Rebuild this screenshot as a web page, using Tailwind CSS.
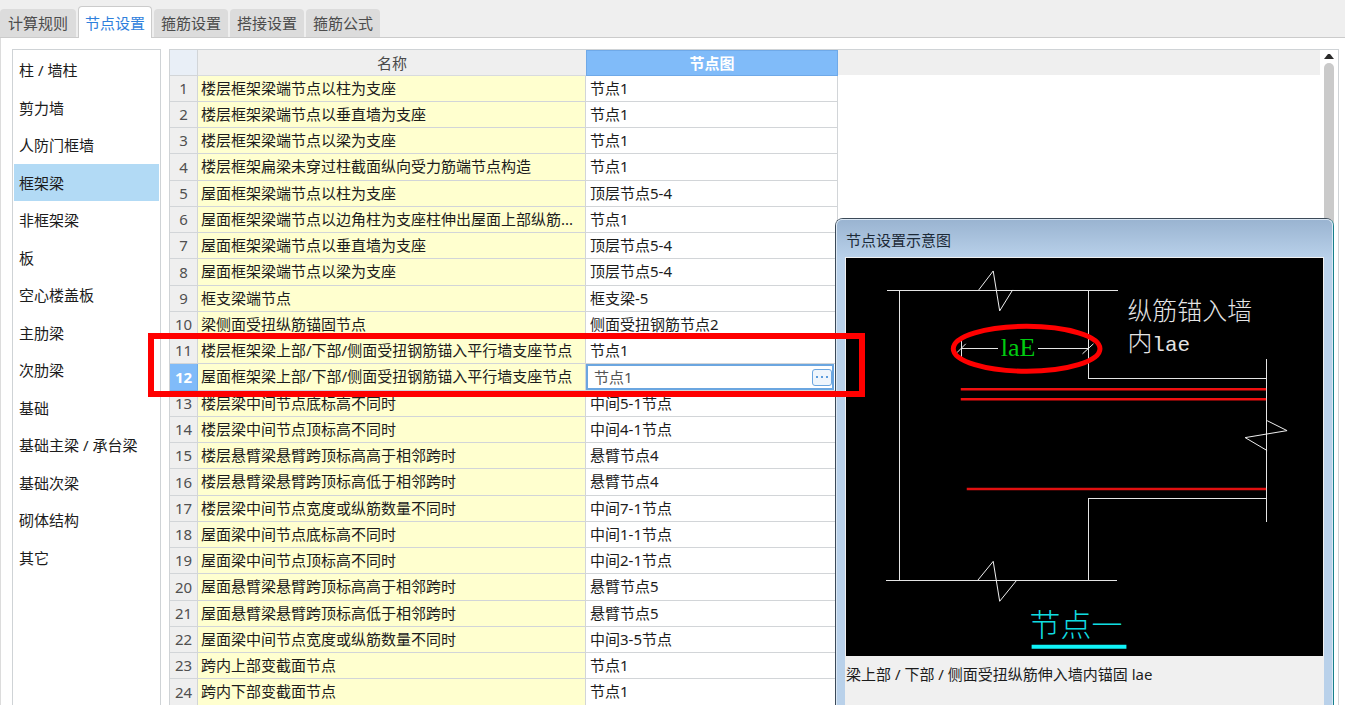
<!DOCTYPE html>
<html lang="zh-CN">
<head>
<meta charset="utf-8">
<title>节点设置</title>
<script src="https://cdn.jsdelivr.net/npm/@tailwindcss/browser@4"></script>
</head>
<body class="relative flex h-screen flex-col overflow-hidden bg-white font-['Noto_Sans','Noto_Sans_CJK_SC',sans-serif] text-[15px] leading-5 text-[#1c1c1c]">
  <nav class="flex h-[38px] shrink-0 items-end gap-0.5 border-b border-[#cbcbcb] bg-[#efefef] text-[#4c4c4c]" role="tablist">
    <button role="tab" class="h-7 w-[76px] rounded-t bg-[#dcdcdc]">计算规则</button>
    <button role="tab" aria-selected="true" class="-mb-px h-8 w-[74px] rounded-t border border-b-0 border-[#cbcbcb] bg-white text-[#2f80dc]">节点设置</button>
    <button role="tab" class="h-7 w-[74px] rounded-t bg-[#dcdcdc]">箍筋设置</button>
    <button role="tab" class="h-7 w-[74px] rounded-t bg-[#dcdcdc]">搭接设置</button>
    <button role="tab" class="h-7 w-[74px] rounded-t bg-[#dcdcdc]">箍筋公式</button>
  </nav>

  <main class="flex min-h-0 flex-1 gap-2 border-l border-[#dcdcdc] pt-[11px] pr-1.5 pl-[11px]">
    <aside class="w-[149px] shrink-0 border border-b-0 border-[#cfd3d6] px-px pt-0.5">
      <ul id="members" class="[&>li]:h-[37px] [&>li]:pb-px [&>li:nth-child(even)]:h-[38px]"></ul>
    </aside>

    <section class="flex min-w-0 flex-1 overflow-hidden border-t border-r border-l border-[#cfd3d6]">
      <table class="w-[668px] shrink-0 table-fixed border-separate border-spacing-0 self-start">
        <colgroup><col class="w-7"><col class="w-[388px]"><col class="w-[252px]"></colgroup>
        <thead>
          <tr class="h-[26px]">
            <th class="border-r border-b border-[#d2d5d8] bg-[#e9eff7] p-0"></th>
            <th class="border-b border-[#d8dbde] bg-[#efefef] p-0 font-normal text-[#4a4a4a]">名称</th>
            <th class="border border-[#6fa9e8] bg-[#80bbf9] p-0 font-bold text-white">节点图</th>
          </tr>
        </thead>
        <tbody id="nodes" class="[&>tr]:h-[26px] [&>tr:nth-child(4n)]:h-[27px]"></tbody>
      </table>
      <div class="h-[25px] flex-1 bg-[#efefef]"></div>
      <div class="flex w-[18px] shrink-0 flex-col items-center gap-1 pt-1">
        <svg class="h-[5px] w-[10px] shrink-0" viewBox="0 0 10 5"><path d="M0 5 4 0H6L10 5Z" fill="#2b2b2b"/></svg>
        <div class="w-[10px] flex-1 rounded-t-full bg-[#cacaca]"></div>
      </div>
    </section>
  </main>

  <section aria-label="节点设置示意图" class="absolute top-[218px] right-[11px] bottom-0 left-[835px] flex flex-col rounded-t-lg border border-b-0 border-[#3c4a58] border-r-[#16808c] bg-[#b9d1ea]">
    <div class="flex flex-1 flex-col rounded-t-md border border-b-0 border-[#dbe8f5] bg-linear-to-b from-[#9ab4d1] to-[#b9d1ea] to-[38px] px-2">
      <h2 class="flex h-[37px] shrink-0 items-center px-px pt-0.5 text-[#1c2a38]">节点设置示意图</h2>
      <div class="flex flex-1 flex-col border border-b-0 border-[#f0f0f0] bg-[#f0f0f0]">
        <svg class="w-full shrink-0 bg-black" viewBox="0 0 478 399" fill="none" role="img" aria-label="节点一">
          <g stroke="#e6e6e6" shape-rendering="crispEdges">
            <path d="M41 32.500H273M53.500 32V323M243.500 32V121M243 120.500H422M421.500 101V265M243 241.500H422M243.500 241V323M40 323.500H272M116 90.500H152M192 90.500H243M115.500 79V100"/>
          </g>
          <g stroke="#f0f0f0">
            <path d="M133 32 147.500 13 154 53 167 32M132 323 147.500 304 154 344 171 323M422 163 442 173 400 180 422 193M111 95 120 86M237 96 248 86"/>
          </g>
          <path d="M115 131.500H421M115 141.500H421" stroke="#f01010" stroke-width="2.500"/>
          <path d="M121 231.500H421" stroke="#e01010" stroke-width="2.500"/>
          <g class="font-['Liberation_Mono','Noto_Sans_CJK_SC',monospace] font-light">
            <text x="282" y="62" font-size="25" fill="#e4e4e4">纵筋锚入墙</text>
            <text x="282" y="93" font-size="25" fill="#e4e4e4">内<tspan font-size="21">lae</tspan></text>
            <text x="155" y="98" class="font-['Liberation_Serif',serif] font-normal" font-size="26" fill="#00cc10">laE</text>
            <text x="184" y="379" font-size="31" fill="#10dce0">节点一</text>
          </g>
          <path d="M186 389.500H281" stroke="#10f4f8" stroke-width="4"/>
          <ellipse cx="181" cy="91" rx="73.500" ry="22.500" stroke="#ff0000" stroke-width="5"/>
        </svg>
        <p class="pt-2">梁上部 / 下部 / 侧面受扭纵筋伸入墙内锚固 lae</p>
      </div>
    </div>
  </section>

  <div class="pointer-events-none absolute top-[333px] left-[148px] h-16 w-[717px] border-6 border-[#ff0000]"></div>

<script>
const members = ['柱 / 墙柱','剪力墙','人防门框墙','框架梁','非框架梁','板','空心楼盖板','主肋梁','次肋梁','基础','基础主梁 / 承台梁','基础次梁','砌体结构','其它'];
document.getElementById('members').innerHTML = members.map(m =>
  `<li><button class="${m === '框架梁' ? 'h-full w-full bg-[#b2daf5] px-[5px] text-left' : 'h-full w-full px-[5px] text-left'}">${m}</button></li>`).join('');

const nodes = [
  ['楼层框架梁端节点以柱为支座','节点1'],
  ['楼层框架梁端节点以垂直墙为支座','节点1'],
  ['楼层框架梁端节点以梁为支座','节点1'],
  ['楼层框架扁梁未穿过柱截面纵向受力筋端节点构造','节点1'],
  ['屋面框架梁端节点以柱为支座','顶层节点5-4'],
  ['屋面框架梁端节点以边角柱为支座柱伸出屋面上部纵筋...','节点1'],
  ['屋面框架梁端节点以垂直墙为支座','顶层节点5-4'],
  ['屋面框架梁端节点以梁为支座','顶层节点5-4'],
  ['框支梁端节点','框支梁-5'],
  ['梁侧面受扭纵筋锚固节点','侧面受扭钢筋节点2'],
  ['楼层框架梁上部/下部/侧面受扭钢筋锚入平行墙支座节点','节点1'],
  ['屋面框架梁上部/下部/侧面受扭钢筋锚入平行墙支座节点','节点1'],
  ['楼层梁中间节点底标高不同时','中间5-1节点'],
  ['楼层梁中间节点顶标高不同时','中间4-1节点'],
  ['楼层悬臂梁悬臂跨顶标高高于相邻跨时','悬臂节点4'],
  ['楼层悬臂梁悬臂跨顶标高低于相邻跨时','悬臂节点4'],
  ['楼层梁中间节点宽度或纵筋数量不同时','中间7-1节点'],
  ['屋面梁中间节点底标高不同时','中间1-1节点'],
  ['屋面梁中间节点顶标高不同时','中间2-1节点'],
  ['屋面悬臂梁悬臂跨顶标高高于相邻跨时','悬臂节点5'],
  ['屋面悬臂梁悬臂跨顶标高低于相邻跨时','悬臂节点5'],
  ['屋面梁中间节点宽度或纵筋数量不同时','中间3-5节点'],
  ['跨内上部变截面节点','节点1'],
  ['跨内下部变截面节点','节点1']
];
const editor = v => `<div class="flex h-[26px] w-[248px] items-center border-2 border-[#6ba6e0] bg-white">
  <input aria-label="节点图" value="${v}" class="min-w-0 flex-1 px-1.5 text-[#555] outline-none">
  <button aria-label="选择节点" class="flex h-[17px] w-5 items-center justify-center rounded-[3px] border border-[#6ba6e0] bg-[#eef5fc]">
    <svg class="h-0.5 w-3" viewBox="0 0 12 2" fill="#5b9bdc"><path d="M0 0H2V2H0ZM5 0H7V2H5ZM10 0H12V2H10Z"/></svg>
  </button></div>`;
document.getElementById('nodes').innerHTML = nodes.map(([name, value], i) => {
  const active = i === 11;
  return `<tr>
    <th scope="row" class="${active ? 'border-r border-b border-[#6fa9e8] bg-[#80bbf9] p-0 pb-px font-bold text-white' : 'border-r border-b border-[#d2d5d8] bg-[#efefef] p-0 pb-px font-normal text-[#505050]'}">${i + 1}</th>
    <td class="overflow-hidden border-r border-b border-[#d2d5d8] bg-[#ffffcf] px-[3px] pt-0 pb-0.5 whitespace-nowrap">${name}</td>
    <td class="${active ? 'border-r border-b border-[#d2d5d8] p-0' : 'border-r border-b border-[#d2d5d8] px-1 pt-0 pb-0.5'}">${active ? editor(value) : value}</td>
  </tr>`;
}).join('');
</script>
</body>
</html>
